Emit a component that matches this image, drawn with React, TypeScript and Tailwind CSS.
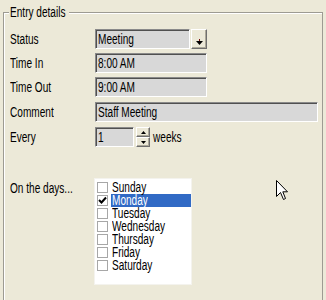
import React from 'react';

const font = { fontFamily: '"Liberation Sans", Arial, sans-serif' };

const days = ['Sunday', 'Monday', 'Tuesday', 'Wednesday', 'Thursday', 'Friday', 'Saturday'];

// the dialog font is tall and narrow, so squeeze Liberation Sans a bit
function T({ children, lh = 'leading-[14px]' }: { children: React.ReactNode; lh?: string }) {
  return (
    <span className={`inline-block origin-left scale-x-[0.72] whitespace-nowrap text-[14px] ${lh}`}>
      {children}
    </span>
  );
}

// sunken edit box, classic look
const sunken =
  'h-[20px] bg-[#d8d8d8] border border-t-[#8a8a8a] border-l-[#8a8a8a] border-b-white border-r-white shadow-[inset_1px_1px_0_#505050] flex items-center pl-[2px] overflow-hidden';

const raised =
  'bg-[#ece9d8] border border-t-white border-l-white border-b-[#6f6f6f] border-r-[#6f6f6f] shadow-[inset_-1px_-1px_0_#aca899] flex items-center justify-center';

function Row({ label, gap = 'mt-[4px]', children }: { label: string; gap?: string; children: React.ReactNode }) {
  return (
    <div className={`flex items-center h-[20px] ${gap}`}>
      <div className="w-[91px] pl-[6px]">
        <T>{label}</T>
      </div>
      {children}
    </div>
  );
}

export default function App() {
  return (
    <div
      className="w-[326px] h-[300px] bg-[#ece9d8] text-black text-[14px] leading-[14px] overflow-hidden relative pt-[5px]"
      style={font}
    >
      <fieldset className="ml-[3px] w-[320px] h-[320px] border border-[#9d9b92] shadow-[inset_1px_1px_0_#fff]">
        <legend className="ml-[5px] px-[1px] w-[60px] h-[14px] bg-[#ece9d8]">
          <T>Entry details</T>
        </legend>

        <div className="mt-[10px]">
          <Row label="Status">
            <div className="flex">
              <div className={`${sunken} w-[95px]`}>
                <T>Meeting</T>
              </div>
              <div className={`${raised} w-[16px] h-[20px] ml-[1px] items-end pb-[3px]`}>
                <svg width="7" height="6" viewBox="0 0 7 6">
                  <path d="M3 0h1v2H3z" fill="#7a1010" />
                  <path d="M0 2h7L3.5 6z" fill="#000" />
                </svg>
              </div>
            </div>
          </Row>
          <Row label="Time In">
            <div className={`${sunken} w-[112px]`}>
              <T>8:00 AM</T>
            </div>
          </Row>
          <Row label="Time Out">
            <div className={`${sunken} w-[112px]`}>
              <T>9:00 AM</T>
            </div>
          </Row>
          <Row label="Comment" gap="mt-[5px]">
            <div className={`${sunken} w-[223px]`}>
              <T>Staff Meeting</T>
            </div>
          </Row>
          <Row label="Every" gap="mt-[5px]">
            <div className={`${sunken} w-[39px]`}>
              <T>1</T>
            </div>
            <div className="flex flex-col ml-[2px] w-[14px] h-[20px]">
              <div className={`${raised} h-[10px]`}>
                <svg width="5" height="3" viewBox="0 0 5 3"><path d="M0 3h5L2.5 0z" fill="#000" /></svg>
              </div>
              <div className={`${raised} h-[10px]`}>
                <svg width="5" height="3" viewBox="0 0 5 3"><path d="M0 0h5L2.5 3z" fill="#000" /></svg>
              </div>
            </div>
            <div className="ml-[3px] w-[50px]">
              <T>weeks</T>
            </div>
          </Row>
        </div>

        <div className="flex items-start mt-[31px]">
          <div className="w-[90px] pl-[6px] pt-[3px]">
            <T>On the days...</T>
          </div>
          <div className="w-[98px] h-[107px] bg-white pt-[2px] border border-[#f4f3ee]">
            {days.map((d) => {
              const on = d === 'Monday';
              return (
                <div key={d} className="flex items-center h-[13px] pl-[2px]">
                  <div className="w-[11px] h-[11px] border border-[#a7a7a7] bg-white flex items-center justify-center shrink-0">
                    {on && (
                      <svg width="9" height="9" viewBox="0 0 9 9">
                        <path d="M1 4l2.5 2.5L8 1.5" stroke="#000" strokeWidth="2" fill="none" />
                      </svg>
                    )}
                  </div>
                  <div
                    className={`ml-[3px] flex-1 h-[13px] pl-[1px] flex items-center ${on ? 'bg-[#316ac5] text-white' : ''}`}
                  >
                    <T lh="leading-[13px]">{d}</T>
                  </div>
                </div>
              );
            })}
          </div>
        </div>
      </fieldset>

      {/* mouse pointer */}
      <svg className="absolute left-[276px] top-[180px]" width="13" height="21" viewBox="0 0 13 21">
        <path d="M0.5 0.5V16.5L4.5 12.5L7.5 19.5L9.5 18.5L6.8 11.8H11.5Z" fill="#fff" stroke="#000" strokeWidth="1" />
      </svg>
    </div>
  );
}
